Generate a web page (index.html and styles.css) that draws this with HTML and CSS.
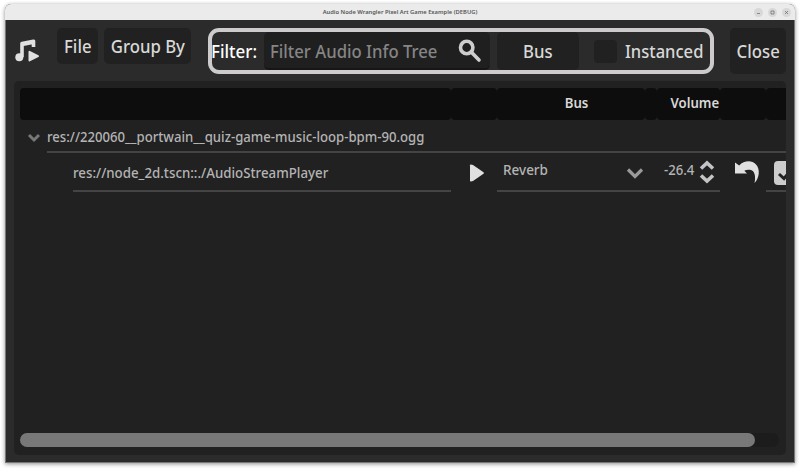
FILE: index.html
```html
<!DOCTYPE html>
<html lang="en">
<head>
<meta charset="utf-8">
<title>Audio Node Wrangler</title>
<link rel="stylesheet" href="styles.css">
</head>
<body>
<div class="window">
  <header class="titlebar">
    <span class="title">Audio Node Wrangler Pixel Art Game Example (DEBUG)</span>
    <div class="controls">
      <span class="control"><svg viewBox="0 0 9 9"><path d="M3 5.5h3"/></svg></span>
      <span class="control"><svg viewBox="0 0 9 9"><path d="M3 3h3v3h-3z"/></svg></span>
      <span class="control"><svg viewBox="0 0 9 9"><path d="M3 3l3 3M6 3l-3 3"/></svg></span>
    </div>
  </header>
  <div class="toolbar">
    <svg class="logo" viewBox="0 0 24 24"><path class="stem" d="M7 18V4.5L18.5 2.2V8M7 5.5L18.5 3.2"/><circle cx="4.3" cy="18.2" r="4"/><path class="mark" d="M14.5 12.8V21.4L23 17.1z"/></svg>
    <button class="btn file"><span class="label">File</span></button>
    <button class="btn group"><span class="label">Group By</span></button>
    <div class="filter">
      <label class="filter-label">Filter:</label>
      <div class="search"><span class="placeholder">Filter Audio Info Tree</span>
        <svg viewBox="0 0 23 23"><circle cx="8.7" cy="8.5" r="6.2"/><path d="M13.2 13l7.8 8"/></svg>
      </div>
      <button class="btn bus"><span class="label">Bus</span></button>
      <span class="checkbox"></span>
      <span class="instanced">Instanced</span>
    </div>
    <button class="btn close"><span class="label">Close</span></button>
  </div>
  <main class="panel">
    <div class="tree">
      <div class="columns head">
        <div class="th"></div><div class="th"></div><div class="th"><span class="h-bus">Bus</span></div><div class="th"></div><div class="th"><span class="h-volume">Volume</span></div><div class="th"></div><div class="th last"></div>
      </div>
      <div class="group-row">
        <svg class="fold" viewBox="0 0 14 10"><path d="M2 2l5 5 5-5"/></svg>
        <div class="group-name"><span>res://220060__portwain__quiz-game-music-loop-bpm-90.ogg</span></div>
      </div>
      <div class="columns item">
        <div class="cell path"><span>res://node_2d.tscn::./AudioStreamPlayer</span></div>
        <div class="cell bare play"><svg viewBox="0 0 14 18"><path d="M0 1.2Q0 .3 1 .4L3 1L13.5 8.3Q14.4 9 13.5 9.7L3 17L1 17.6Q0 17.7 0 16.8z"/></svg></div>
        <div class="cell reverb"><span>Reverb</span><svg viewBox="0 0 18 12"><path d="M2 2.5l7 7 7-7"/></svg></div>
        <div class="cell"></div>
        <div class="cell volume"><span>-26.4</span><svg viewBox="0 0 16 24"><path d="M2 8.5L8 3l6 5.5M2 15.5L8 21l6-5.5"/></svg></div>
        <div class="cell bare undo"><svg viewBox="0 0 24 24"><path d="M0 2.5L4.2 5.5C9 .2 17 0 20.8 4.2C25.8 9.4 24 18.5 19.5 23C21 16 19.5 10.3 15 9.8Q11.7 9.3 9.3 10.7L12 13.5H0z"/></svg></div>
        <div class="cell check"><svg viewBox="0 0 24 24"><rect width="24" height="24" rx="4"/><path d="M5 13l5 4.5L19 7"/></svg></div>
      </div>
    </div>
    <div class="scrollbar"><div class="thumb"></div></div>
  </main>
</div>
</body>
</html>
```
FILE: styles.css
```css
* { box-sizing: border-box; }
body {
  margin: 0;
  padding: 4px 5px 7px;
  height: 470px;
  overflow: hidden;
  background: #fff;
  color: #d8d8d8;
  font: 500 18px/20px "Noto Sans", sans-serif;
}
span, label { white-space: nowrap; }
svg { display: block; flex: none; overflow: visible; }
.window {
  height: 459px;
  display: flex;
  flex-direction: column;
  background: #2b2b2b;
  border: 1px solid #777;
  border-top: 0;
  border-radius: 6px 6px 0 0;
  box-shadow: 0 1px 4px rgba(0, 0, 0, .45);
}
.titlebar {
  flex: none;
  height: 16px;
  margin: 0 -1px;
  display: grid;
  grid-template-columns: 1fr auto 1fr;
  align-items: center;
  background: #ebebeb;
  border-radius: 6px 6px 0 0;
}
.title { grid-column: 2; color: #555; font-size: 5.8px; font-weight: 600; line-height: 16px; }
.controls { display: flex; justify-content: flex-end; gap: 5px; padding-right: 4px; }
.control { width: 9px; height: 9px; border-radius: 50%; background: #d8d8d8; }
.control svg { width: 9px; height: 9px; fill: none; stroke: #666; stroke-width: .7; }
.toolbar { flex: none; height: 61px; display: flex; align-items: flex-start; padding: 8px 8px 0 9px; }
.logo { width: 24px; height: 24px; margin: 11px 18px 0 0; fill: #e0e0e0; }
.logo .stem { fill: none; stroke: #e0e0e0; stroke-width: 3.6; stroke-linejoin: round; }
.logo .mark { stroke: #e0e0e0; stroke-width: 2; stroke-linejoin: round; }
.btn {
  flex: none;
  display: flex;
  justify-content: center;
  align-items: center;
  height: 36px;
  padding: 0;
  border: 0;
  border-radius: 5px;
  background: #212121;
  color: inherit;
  font: inherit;
}
.label { transform: scaleX(.93); }
.file { width: 41px; margin-right: 6px; }
.group { width: 87px; margin-right: 17px; }
.filter {
  flex: none;
  width: 506px;
  height: 46px;
  margin-right: 16px;
  display: flex;
  align-items: center;
  border: 4px solid #cecbcc;
  border-radius: 11px;
}
.filter-label { width: 52px; color: #fff; margin-left: -1px; transform: scaleX(.94); transform-origin: 0 0; }
.search {
  width: 226px;
  height: 38px;
  margin: 0 7px 0 1px;
  padding: 0 9px 0 6px;
  display: flex;
  align-items: center;
  justify-content: space-between;
  background: #1f1f1f;
  border-bottom: 2px solid #161616;
  border-radius: 5px;
  color: #858585;
}
.placeholder { transform: scaleX(.928); transform-origin: 0 0; padding-top: 1px; }
.search svg { width: 23px; height: 23px; fill: none; stroke: #cdcdcd; stroke-width: 3.6; stroke-linecap: round; }
.bus { width: 82px; height: 38px; margin-right: 15px; }
.checkbox { width: 23px; height: 23px; margin-right: 8px; border-radius: 4px; background: #212121; }
.instanced { transform: scaleX(.92); transform-origin: 0 0; }
.close { width: 56px; height: 46px; }
.panel {
  flex: none;
  height: 374px;
  margin: 0 8px;
  padding: 7px 0 8px 6px;
  display: flex;
  flex-direction: column;
  justify-content: space-between;
  background: #212121;
  border-radius: 5px;
  overflow: hidden;
}
.columns { display: grid; grid-template-columns: 431px 46px 148px 12px 63px 46px 20px; }
.head { height: 32px; font-size: 14px; font-weight: 600; }
.th {
  display: flex;
  align-items: center;
  justify-content: center;
  background: #0d0d0d;
  border-radius: 4px;
}
.last { border-radius: 4px 0 0 4px; }
.th span { margin: -2px 0 0 12px; transform: scaleX(.94); }
.group-row { height: 33px; display: flex; padding-left: 7px; font-size: 15px; color: #b4b4b4; }
.group-row span, .cell span { display: inline-block; transform: scaleX(.877); transform-origin: 0 0; }
.fold { width: 14px; height: 10px; margin: 13px 6px 0 0; fill: none; stroke: #777; stroke-width: 3; }
.group-name { flex: 1; height: 33px; padding-top: 6px; border-bottom: 2px solid #444; }
.item { height: 39px; font-size: 15px; color: #b4b4b4; }
.cell { height: 39px; display: flex; border-bottom: 2px solid #444; }
.cell.bare { border-bottom: 0; }
.path { margin-left: 53px; padding-top: 9px; }
.cell.path span { transform: scaleX(.886); }
.play { padding: 11px 0 0 19px; }
.play svg { width: 14px; height: 18px; fill: #e0e0e0; }
.reverb { justify-content: space-between; padding: 6px 1px 0 6px; }
.cell.reverb span { transform: scaleX(.9); }
.reverb svg { width: 18px; height: 12px; margin-top: 8px; fill: none; stroke: #999; stroke-width: 3.2; }
.volume { justify-content: space-between; padding: 6px 5px 0 7px; }
.volume svg { width: 16px; height: 24px; margin-top: 1px; fill: none; stroke: #c4c4c4; stroke-width: 3.6; }
.undo { padding: 7px 0 0 15px; }
.undo svg { width: 24px; height: 24px; fill: #e0e0e0; }
.check { padding: 8px 0 0 8px; }
.check svg { width: 24px; height: 24px; fill: #cdcdcd; }
.check path { fill: none; stroke: #212121; stroke-width: 3; }
.scrollbar { width: 759px; height: 14px; border-radius: 7px; background: #1c1c1c; }
.thumb { width: 735px; height: 14px; border-radius: 7px; background: #787878; }
```
